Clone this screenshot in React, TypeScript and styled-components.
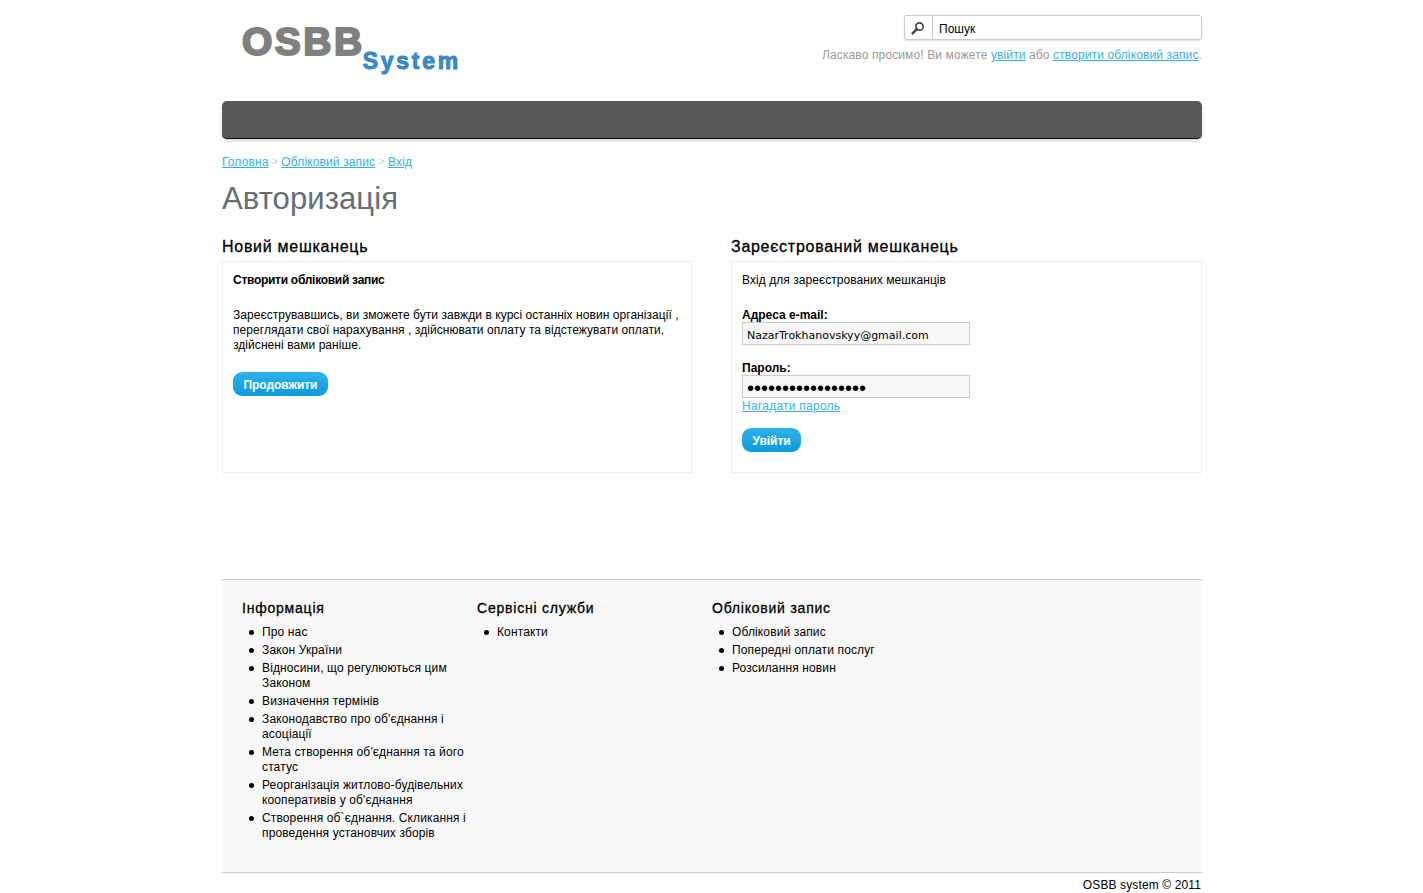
import styled, { createGlobalStyle } from "styled-components";

const GlobalStyle = createGlobalStyle`
  html, body {
    margin: 0;
    padding: 0;
    background: #fff;
    overflow: hidden;
  }
  body {
    padding-left: 1px;
    font-family: "Liberation Sans", Arial, sans-serif;
    font-size: 12px;
    color: #000;
  }
  a {
    color: #38b0e3;
    text-decoration: underline;
  }
`;

const Page = styled.div`
  width: 980px;
  margin: 0 auto;
`;

const Header = styled.header`
  height: 101px;
  display: flex;
  justify-content: space-between;
  align-items: flex-start;
`;

const Logo = styled.div`
  display: flex;
  align-items: flex-end;
  padding: 20px 0 0 20px;
  font-family: "Liberation Sans", Arial, sans-serif;
  font-weight: 700;
`;

const LogoMain = styled.span`
  font-size: 39px;
  line-height: 44px;
  letter-spacing: 2.5px;
  color: #808080;
  -webkit-text-stroke: 2px #808080;
`;

const LogoSub = styled.span`
  font-size: 23px;
  line-height: 28px;
  letter-spacing: 2.75px;
  color: #3a88c6;
  -webkit-text-stroke: 1px #3a88c6;
  margin: 0 0 -11px -2px;
`;

const HeaderRight = styled.div`
  display: flex;
  flex-direction: column;
  align-items: flex-end;
  padding-top: 15px;
`;

const SearchBox = styled.div`
  width: 296px;
  height: 23px;
  display: flex;
  border: 1px solid #ccc;
  border-radius: 3px;
  box-shadow: 0 1px 2px #e0e0e0;
  background: #fff;
`;

const SearchIcon = styled.div`
  width: 25px;
  padding-right: 2px;
  display: flex;
  align-items: center;
  justify-content: center;
  border-right: 1px solid #ccc;
`;

const SearchText = styled.div`
  flex: 1;
  padding: 2px 0 0 6px;
  font-size: 12px;
  line-height: 22px;
  color: #000;
`;

const Welcome = styled.div`
  margin-top: 8px;
  line-height: 15px;
  letter-spacing: 0.12px;
  color: #999;
`;

const MenuBar = styled.nav`
  height: 37px;
  background: #595959;
  border-bottom: 1px solid #111;
  border-radius: 5px;
  box-shadow: 0 2px 3px #d8d8d8;
`;

const Breadcrumb = styled.div`
  margin-top: 16px;
  display: flex;
  align-items: center;
  gap: 3.5px;
  line-height: 14px;
  letter-spacing: 0.13px;
`;

const CrumbSeparator = styled.span`
  font-size: 10px;
  letter-spacing: 0;
  color: #c4c4c4;
`;

const Title = styled.h1`
  margin: 12px 0 0;
  font-size: 31px;
  line-height: 36px;
  font-weight: 400;
  letter-spacing: 0.1px;
  color: #646e73;
`;

const Columns = styled.div`
  margin-top: 19px;
  display: grid;
  grid-template-columns: 470px 471px;
  justify-content: space-between;
`;

const ColumnTitle = styled.h2`
  margin: 0 0 4px;
  padding-top: 1px;
  font-size: 16px;
  line-height: 20px;
  font-weight: 400;
  letter-spacing: 0.72px;
  -webkit-text-stroke: 0.3px #000;
`;

const Box = styled.div`
  height: 189px;
  padding: 11px 10px 10px;
  border: 1px solid #eee;
`;

const BoxLine = styled.p<{ $bold?: boolean; $gap?: number }>`
  margin: 0 0 ${(p) => p.$gap ?? 0}px;
  line-height: 15px;
  letter-spacing: ${(p) => (p.$bold ? "-0.28px" : "0.06px")};
  font-weight: ${(p) => (p.$bold ? 700 : 400)};
`;

const Button = styled.button<{ $top?: number }>`
  display: block;
  height: 24px;
  margin-top: ${(p) => p.$top ?? 0}px;
  padding: 1px 10.5px 0;
  border: 0;
  border-radius: 9px;
  background: linear-gradient(#2eb2ee, #0a9bdc);
  color: #fff;
  font-family: "Liberation Sans", Arial, sans-serif;
  font-size: 12px;
  font-weight: 700;
  letter-spacing: -0.05px;
`;

const Label = styled.div<{ $top: number }>`
  margin: ${(p) => p.$top}px 0 -1px;
  font-weight: 700;
  line-height: 15px;
`;

const Field = styled.div<{ $dots?: boolean }>`
  width: 222px;
  height: 21px;
  padding: 0 0 0 4px;
  border: 1px solid #ccc;
  background: #f8f8f8;
  font-family: ${(p) => (p.$dots ? '"Liberation Sans", Arial' : '"DejaVu Sans", Verdana')}, sans-serif;
  font-size: ${(p) => (p.$dots ? "20px" : "11px")};
  line-height: ${(p) => (p.$dots ? "24px" : "26px")};
  overflow: hidden;
`;

const Remind = styled.a`
  display: block;
  margin-top: 1px;
  line-height: 15px;
  letter-spacing: 0.25px;
`;

const Footer = styled.footer`
  margin-top: 106px;
  height: 292px;
  display: grid;
  grid-template-columns: repeat(3, 235px);
  padding: 0 0 0 20px;
  background: #f8f8f8;
  border-top: 1px solid #ccc;
  border-bottom: 1px solid #ccc;
`;

const FooterColumn = styled.div`
  padding-top: 21px;
`;

const FooterTitle = styled.h3`
  margin: 0 0 9px;
  font-size: 14px;
  line-height: 15px;
  font-weight: 400;
  letter-spacing: 0.78px;
  -webkit-text-stroke: 0.3px #000;
`;

const FooterList = styled.ul`
  margin: 0;
  padding: 0 0 0 20px;
  list-style: none;
`;

const FooterItem = styled.li`
  position: relative;
  margin-bottom: 3px;
  line-height: 15px;
  letter-spacing: 0.13px;

  &::before {
    content: "";
    position: absolute;
    top: 5px;
    left: -13px;
    width: 5px;
    height: 5px;
    border-radius: 50%;
    background: #000;
  }
`;

const Copyright = styled.div`
  padding: 5px 1px 0 0;
  text-align: right;
  line-height: 15px;
  letter-spacing: 0.12px;
`;

const footerColumns = [
  {
    title: "Інформація",
    items: [
      "Про нас",
      "Закон України",
      "Відносини, що регулюються цим Законом",
      "Визначення термінів",
      "Законодавство про об'єднання і асоціації",
      "Мета створення об'єднання та його статус",
      "Реорганізація житлово-будівельних кооперативів у об'єднання",
      "Створення об`єднання. Скликання і проведення установчих зборів",
    ],
  },
  { title: "Сервісні служби", items: ["Контакти"] },
  {
    title: "Обліковий запис",
    items: ["Обліковий запис", "Попередні оплати послуг", "Розсилання новин"],
  },
];

const App = () => {
  return (
    <Page>
      <GlobalStyle />
      <Header>
        <Logo>
          <LogoMain>OSBB</LogoMain>
          <LogoSub>System</LogoSub>
        </Logo>
        <HeaderRight>
          <SearchBox>
            <SearchIcon>
              <svg width="14" height="14" viewBox="0 0 14 14" fill="none">
                <circle cx="8.5" cy="5.5" r="3.7" stroke="#444" strokeWidth="1.7" />
                <path d="M5.8 8.2 1.6 12.4" stroke="#444" strokeWidth="2.4" strokeLinecap="round" />
              </svg>
            </SearchIcon>
            <SearchText>Пошук</SearchText>
          </SearchBox>
          <Welcome>
            Ласкаво просимо! Ви можете <a href="#">увійти</a> або{" "}
            <a href="#">створити обліковий запис</a>.
          </Welcome>
        </HeaderRight>
      </Header>
      <MenuBar />
      <Breadcrumb>
        <a href="#">Головна</a>
        <CrumbSeparator>&gt;</CrumbSeparator>
        <a href="#">Обліковий запис</a>
        <CrumbSeparator>&gt;</CrumbSeparator>
        <a href="#">Вхід</a>
      </Breadcrumb>
      <Title>Авторизація</Title>
      <Columns>
        <section>
          <ColumnTitle>Новий мешканець</ColumnTitle>
          <Box>
            <BoxLine $bold $gap={20}>Створити обліковий запис</BoxLine>
            <BoxLine $gap={19}>
              Зареєструвавшись, ви зможете бути завжди в курсі останніх новин організації ,
              переглядати свої нарахування , здійснювати оплату та відстежувати оплати,
              здійснені вами раніше.
            </BoxLine>
            <Button>Продовжити</Button>
          </Box>
        </section>
        <section>
          <ColumnTitle>Зареєстрований мешканець</ColumnTitle>
          <Box>
            <BoxLine>Вхід для зареєстрованих мешканців</BoxLine>
            <Label $top={20}>Адреса e-mail:</Label>
            <Field>NazarTrokhanovskyy@gmail.com</Field>
            <Label $top={16}>Пароль:</Label>
            <Field $dots>•••••••••••••••••</Field>
            <Remind href="#">Нагадати пароль</Remind>
            <Button $top={14}>Увійти</Button>
          </Box>
        </section>
      </Columns>
      <Footer>
        {footerColumns.map((column) => (
          <FooterColumn key={column.title}>
            <FooterTitle>{column.title}</FooterTitle>
            <FooterList>
              {column.items.map((item) => (
                <FooterItem key={item}>{item}</FooterItem>
              ))}
            </FooterList>
          </FooterColumn>
        ))}
      </Footer>
      <Copyright>OSBB system © 2011</Copyright>
    </Page>
  );
};

export default App;
